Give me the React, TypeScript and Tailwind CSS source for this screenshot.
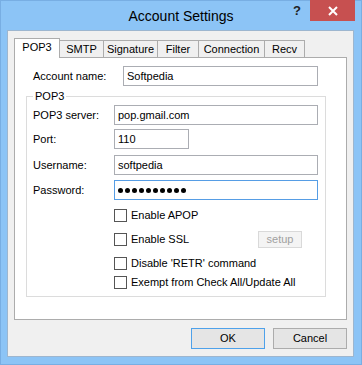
import React from 'react';

const tabs = [
  { name: 'POP3', w: 'w-[46px]' },
  { name: 'SMTP', w: 'w-[45px]' },
  { name: 'Signature', w: 'w-[55px]' },
  { name: 'Filter', w: 'w-[42px]' },
  { name: 'Connection', w: 'w-[67px]' },
  { name: 'Recv', w: 'w-[41px]' },
];

const TextBox = ({ value, width, focused }: { value?: string; width: string; focused?: boolean }) => (
  <div
    className={`${width} h-[20px] bg-white border ${focused ? 'border-[#569de5]' : 'border-[#abadb3]'} flex items-center pl-[3px]`}
  >
    {value}
  </div>
);

const Field = ({ label, children, className = '' }: { label: string; children: React.ReactNode; className?: string }) => (
  <div className={`flex items-center ${className}`}>
    <span className="w-[81px]">{label}</span>
    {children}
  </div>
);

const Check = ({ label, className = '', children }: { label: string; className?: string; children?: React.ReactNode }) => (
  <div className={`flex items-center h-[16px] pl-[81px] ${className}`}>
    <div className="w-[13px] h-[13px] bg-white border border-[#555555]" />
    <span className="ml-[4px] flex-1">{label}</span>
    {children}
  </div>
);

export default function App() {
  return (
    <div className="w-[362px] h-[365px] bg-[#8cc4f6] border border-[#78aee3] flex flex-col font-['Liberation_Sans',Arial,sans-serif] text-[11px] text-black">
      {/* title bar */}
      <div className="h-[29px] grid grid-cols-[1fr_auto_1fr]">
        <div />
        <div className="text-[14px] pt-[7px] leading-[16px]">Account Settings</div>
        <div className="flex justify-end items-start pr-[6px] -mt-px">
          <div className="w-[26px] h-[21px] flex items-center justify-center text-[13px] font-bold text-[#222]">?</div>
          <div className="w-[45px] h-[21px] bg-[#c75050] flex items-center justify-center">
            <svg width="10" height="10" viewBox="0 0 10 10">
              <path d="M1 1 L9 9 M9 1 L1 9" stroke="#fff" strokeWidth="2" />
            </svg>
          </div>
        </div>
      </div>

      {/* client area */}
      <div className="ml-[6px] w-[347px] h-[327px] bg-[#f0f0f0] border border-[#9db6cf] pt-[7px] pl-[6px]">
        <div className="flex items-end h-[20px] -mb-px">
          {tabs.map((t, i) =>
            i === 0 ? (
              <div
                key={t.name}
                className={`${t.w} h-[20px] relative z-10 bg-white border border-b-0 border-[#acacac] flex items-center justify-center pb-[2px]`}
              >
                {t.name}
              </div>
            ) : (
              <div
                key={t.name}
                className={`${t.w} h-[17px] mb-px -ml-px bg-[#f0f0f0] border border-b-0 border-[#acacac] flex items-center justify-center`}
              >
                {t.name}
              </div>
            )
          )}
        </div>

        <div className="w-[333px] h-[263px] bg-white border border-[#acacac] pl-[18px] pt-[8px]">
          <div className="flex items-center">
            <span className="w-[90px]">Account name:</span>
            <TextBox value="Softpedia" width="w-[195px]" />
          </div>

          <fieldset className="-ml-[7px] mt-[4px] w-[300px] border border-[#dcdcdc] pl-[6px] pb-[6px]">
            <legend className="px-[2px] leading-[13px]">POP3</legend>
            <Field label="POP3 server:" className="mt-[2px]">
              <TextBox value="pop.gmail.com" width="w-[204px]" />
            </Field>
            <Field label="Port:" className="mt-[4px]">
              <TextBox value="110" width="w-[75px]" />
            </Field>
            <Field label="Username:" className="mt-[6px]">
              <TextBox value="softpedia" width="w-[204px]" />
            </Field>
            <Field label="Password:" className="mt-[5px]">
              <div className="w-[204px] h-[20px] bg-white border border-[#569de5] flex items-center gap-[2px] pl-[3px]">
                {Array.from({ length: 10 }).map((_, i) => (
                  <div key={i} className="w-[5px] h-[5px] rounded-full bg-black" />
                ))}
              </div>
            </Field>

            <Check label="Enable APOP" className="mt-[7px]" />
            <Check label="Enable SSL" className="mt-[8px] h-[17px]">
              <div className="w-[44px] h-[17px] mr-[23px] bg-[#f4f4f4] border border-[#d9d9d9] text-[#a0a0a0] flex items-center justify-center">
                setup
              </div>
            </Check>
            <Check label="Disable 'RETR' command" className="mt-[7px]" />
            <Check label="Exempt from Check All/Update All" className="mt-[3px]" />
          </fieldset>
        </div>

        <div className="w-[333px] flex justify-end gap-[8px] mt-[8px]">
          <div className="w-[74px] h-[21px] bg-[#e5e5e5] border border-[#4ea1ea] flex items-center justify-center">OK</div>
          <div className="w-[74px] h-[21px] bg-[#e5e5e5] border border-[#acacac] flex items-center justify-center">Cancel</div>
        </div>
      </div>
    </div>
  );
}
